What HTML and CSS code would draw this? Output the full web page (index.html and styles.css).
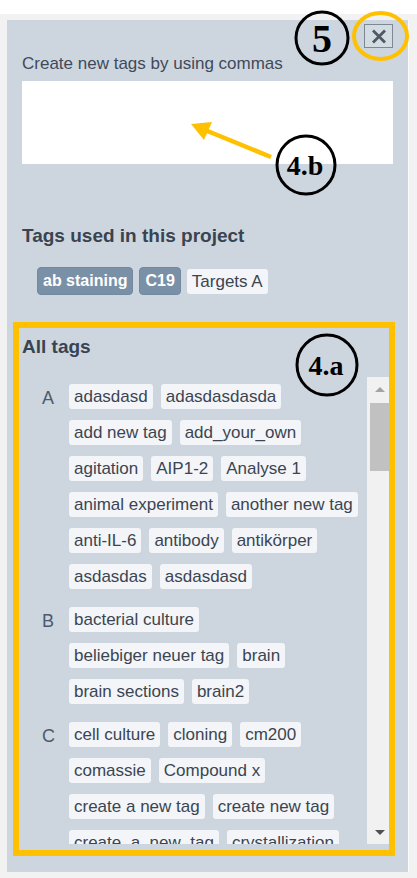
FILE: index.html
```html
<!DOCTYPE html>
<html lang="en">
<head>
    <meta charset="UTF-8">
    <meta name="viewport" content="width=device-width, initial-scale=1.0">
    <title>Project Tags</title>
    <link rel="stylesheet" href="styles.css">
</head>
<body>
    <div class="page">
        <div class="tag-dialog">
            <div class="dialog-top">
                <button class="close-btn" aria-label="Close">
                    <svg width="16" height="15" viewBox="0 0 16 15">
                        <path d="M2 1.5 L14 13.5 M14 1.5 L2 13.5" stroke="#4f5864" stroke-width="2.8" fill="none"/>
                    </svg>
                </button>
            </div>

            <label class="field-label" for="newTags">Create new tags by using commas</label>
            <textarea id="newTags" class="new-tags"></textarea>

            <h3 class="section-title used-title">Tags used in this project</h3>
            <div class="used-tags">
                <span class="tag tag-active">ab staining</span>
                <span class="tag tag-active">C19</span>
                <span class="tag">Targets A</span>
            </div>

            <div class="all-tags">
                <h3 class="section-title">All tags</h3>
                <div class="tag-browser">
                    <div class="tag-list" id="tagList"></div>
                    <div class="scrollbar">
                        <div class="scroll-btn"><span class="arrow-up"></span></div>
                        <div class="scroll-track">
                            <div class="scroll-thumb"></div>
                        </div>
                        <div class="scroll-btn"><span class="arrow-down"></span></div>
                    </div>
                </div>
            </div>
        </div>

        <!-- callout marks drawn over the dialog -->
        <svg class="annotations" width="417" height="878" viewBox="0 0 417 878">
            <ellipse cx="380.5" cy="36" rx="26.5" ry="23" fill="none" stroke="#ffc000" stroke-width="4"/>
            <circle cx="322" cy="38" r="26" fill="none" stroke="#000" stroke-width="3"/>
            <text x="322" y="52" text-anchor="middle" class="mark mark-big">5</text>

            <line x1="271" y1="157" x2="205" y2="130" stroke="#ffc000" stroke-width="4.5"/>
            <polygon points="191,124 212,122 204,140" fill="#ffc000"/>
            <circle cx="306" cy="165" r="29" fill="none" stroke="#000" stroke-width="3"/>
            <text x="305" y="175" text-anchor="middle" class="mark">4.b</text>

            <circle cx="327" cy="365" r="30" fill="none" stroke="#000" stroke-width="3"/>
            <text x="326" y="375" text-anchor="middle" class="mark">4.a</text>
        </svg>
    </div>

    <script>
        const tagGroups = {
            A: ['adasdasd', 'adasdasdasda', 'add new tag', 'add_your_own', 'agitation', 'AIP1-2', 'Analyse 1',
                'animal experiment', 'another new tag', 'anti-IL-6', 'antibody', 'antikörper', 'asdasdas', 'asdasdasd'],
            B: ['bacterial culture', 'beliebiger neuer tag', 'brain', 'brain sections', 'brain2'],
            C: ['cell culture', 'cloning', 'cm200', 'comassie', 'Compound x', 'create a new tag', 'create new tag',
                'create_a_new_tag', 'crystallization']
        };

        const tagList = document.getElementById('tagList');

        Object.keys(tagGroups).forEach(letter => {
            const group = document.createElement('div');
            group.className = 'tag-group';

            const letterCell = document.createElement('span');
            letterCell.className = 'group-letter';
            letterCell.textContent = letter;
            group.appendChild(letterCell);

            const tagsCell = document.createElement('div');
            tagsCell.className = 'group-tags';
            tagGroups[letter].forEach(name => {
                const tag = document.createElement('span');
                tag.className = 'tag';
                tag.textContent = name;
                tagsCell.appendChild(tag);
            });
            group.appendChild(tagsCell);

            tagList.appendChild(group);
        });
    </script>
</body>
</html>
```

FILE: styles.css
```css
body {
    margin: 0;
    background: #fff;
    font-family: "Liberation Sans", Arial, sans-serif;
    color: #3b4552;
}
.page {
    position: relative;
    margin-top: 14px;
    height: 864px;
    padding: 6px 8px 0 7px;
    box-sizing: border-box;
    background: #f2f2f2;
}
.tag-dialog {
    background: #cdd6df;
    padding: 4px 15px 16px 15px;
    border-right: 1px solid #fafafa;
}
.dialog-top {
    display: flex;
    justify-content: flex-end;
}
.close-btn {
    width: 29px;
    height: 24px;
    padding: 0;
    margin: 0;
    border: 1.5px solid #7d8893;
    background: #d3dbe3;
    display: flex;
    align-items: center;
    justify-content: center;
    cursor: pointer;
}
.field-label {
    display: block;
    margin-top: 6px;
    font-size: 17px;
    line-height: 20px;
    color: #3f4a5a;
}
.new-tags {
    display: block;
    width: 100%;
    height: 83px;
    margin-top: 7px;
    border: none;
    background: #fff;
    resize: none;
    box-sizing: border-box;
    font-family: inherit;
    font-size: 16px;
}
.section-title {
    margin: 0;
    font-size: 19px;
    line-height: 22px;
    font-weight: bold;
    color: #3a4350;
}
.used-title {
    margin-top: 61px;
}
.used-tags {
    display: flex;
    align-items: center;
    gap: 6px;
    margin: 20px 0 0 15px;
}
.tag {
    display: inline-block;
    font-size: 17px;
    line-height: 25px;
    padding: 0 5px;
    background: #f3f5f8;
    border-radius: 3px;
    white-space: nowrap;
}
.tag-active {
    font-size: 16px;
    font-weight: bold;
    line-height: 24px;
    padding: 1px 5px;
    color: #fff;
    background: #7a90a7;
    border: 1px solid #7189a1;
    border-radius: 4px;
}
.all-tags {
    margin: 27px -2px 0 -9px;
    border: 6px solid #ffc000;
    padding: 8px 0 6px 3px;
}
.all-tags .section-title {
    margin-bottom: 19px;
}
.tag-browser {
    display: flex;
    height: 467px;
}
.tag-list {
    flex: 1;
    overflow: hidden;
    padding-top: 7px;
}
.tag-group {
    display: flex;
    margin-bottom: 18px;
}
.group-letter {
    flex: 0 0 27px;
    padding: 2px 0 0 20px;
    font-size: 18px;
    line-height: 25px;
    color: #4b5a6e;
}
.group-tags {
    flex: 1;
    display: flex;
    flex-wrap: wrap;
    gap: 11px 8px;
    padding-right: 2px;
}
.scrollbar {
    width: 22px;
    display: flex;
    flex-direction: column;
    background: #f1f1f1;
}
.scroll-btn {
    height: 24px;
    display: flex;
    align-items: center;
    justify-content: center;
    padding-left: 3px;
}
.arrow-up {
    width: 0;
    height: 0;
    border-left: 5px solid transparent;
    border-right: 5px solid transparent;
    border-bottom: 5px solid #a3a3a3;
}
.arrow-down {
    width: 0;
    height: 0;
    border-left: 5px solid transparent;
    border-right: 5px solid transparent;
    border-top: 5px solid #505050;
}
.scroll-track {
    flex: 1;
    padding: 2px 0 0 3px;
}
.scroll-thumb {
    height: 68px;
    background: #c1c1c1;
}
.annotations {
    position: absolute;
    top: -14px;
    left: 0;
    pointer-events: none;
}
.mark {
    font-family: "Liberation Serif", "Times New Roman", serif;
    font-weight: bold;
    font-size: 28px;
    fill: #000;
}
.mark-big {
    font-size: 40px;
}
```
